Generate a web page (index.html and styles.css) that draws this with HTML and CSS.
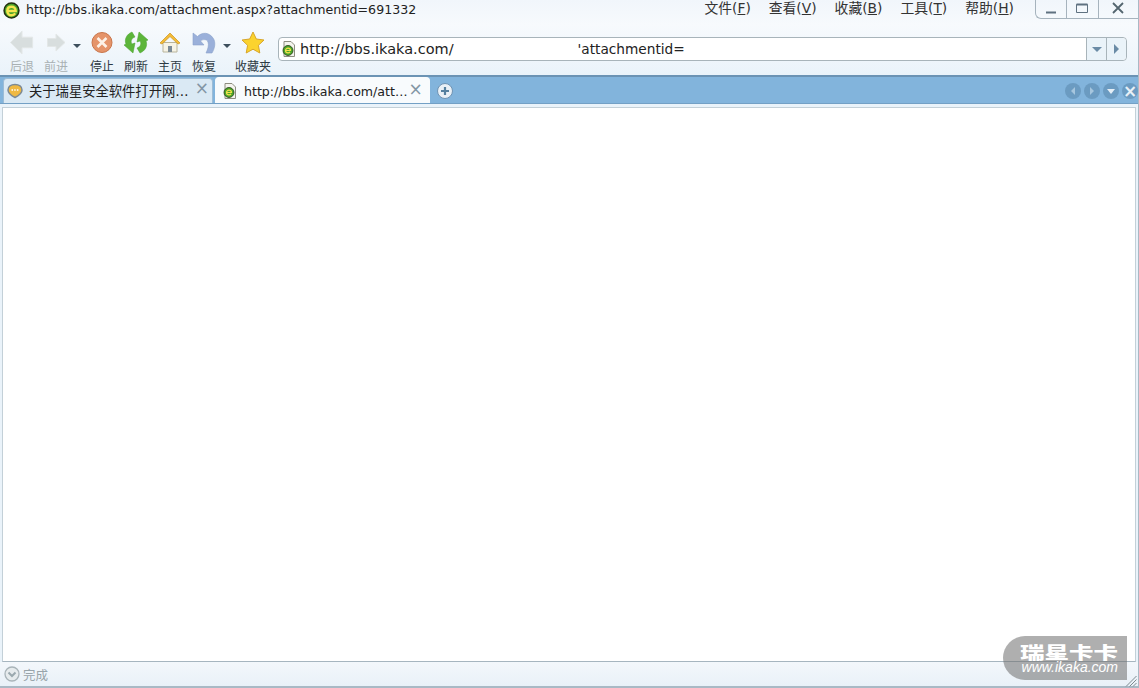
FILE: index.html
```html
<!DOCTYPE html>
<html lang="zh">
<head>
<meta charset="utf-8">
<title>Browser</title>
<link rel="stylesheet" href="styles.css">
</head>
<body>
<svg class="defs" width="0" height="0">
  <defs>
    <g id="ie">
      <circle cx="8" cy="8" r="7" fill="#4aa52a" stroke="#23300f" stroke-width="1.400"/>
      <path d="M4 8.500h8c0-2.600-1.600-4-4-4s-4 1.600-4 4 1.700 4 4 4c1.500 0 2.700-.6 3.500-1.800" fill="none" stroke="#f6e54e" stroke-width="2.200"/>
    </g>
    <g id="pagefav">
      <path d="M3 .5h7l3.500 3.500v11.500H3z" fill="#f4f4ee" stroke="#8d8d80"/>
      <circle cx="7" cy="9.500" r="5" fill="#4aa52a" stroke="#263a12" stroke-width=".8"/>
      <path d="M4.500 9.500h5c0-1.500-1-2.300-2.500-2.300S4.500 8.200 4.500 9.500s1 2.400 2.500 2.400c.9 0 1.600-.3 2.100-1" fill="none" stroke="#f4e04a" stroke-width="1.200"/>
    </g>
  </defs>
</svg>
<div class="window">
  <header class="titlebar">
    <svg class="title-icon" width="17" height="17" viewBox="0 0 16 16"><use href="#ie"/></svg>
    <span class="title-text">http://bbs.ikaka.com/attachment.aspx?attachmentid=691332</span>
    <nav class="menu">
      <span class="menu-item">文件(<u>F</u>)</span>
      <span class="menu-item">查看(<u>V</u>)</span>
      <span class="menu-item">收藏(<u>B</u>)</span>
      <span class="menu-item">工具(<u>T</u>)</span>
      <span class="menu-item">帮助(<u>H</u>)</span>
    </nav>
    <div class="win-controls">
      <span class="win-btn"><svg width="14" height="14" viewBox="0 0 14 14"><path d="M2 11.500h10" stroke="#5f7180" stroke-width="2"/></svg></span>
      <span class="win-btn"><svg width="14" height="14" viewBox="0 0 14 14"><path d="M1.500 3.500h11v8h-11z" fill="none" stroke="#5f7180"/><path d="M1.500 3.500h11" stroke="#5f7180" stroke-width="2"/></svg></span>
      <span class="win-btn win-close"><svg width="14" height="14" viewBox="0 0 14 14"><path d="M2 2l10 10M12 2L2 12" stroke="#54656f" stroke-width="1.800"/></svg></span>
    </div>
  </header>

  <section class="toolbar">
    <div class="tool tool-back is-off">
      <svg width="26" height="26" viewBox="0 0 26 26"><path d="M1 13 13 1v6.500h11v11H13V25z" fill="#d8dede" stroke="#e3e7e7"/></svg>
      <span class="tool-label">后退</span>
    </div>
    <div class="tool tool-forward is-off">
      <svg width="20" height="20" viewBox="0 0 20 20"><path d="M19 10 10 1.500v4.500H1.500v8H10v4.500z" fill="#d8dede" stroke="#e3e7e7"/></svg>
      <span class="tool-label">前进</span>
    </div>
    <span class="caret caret-nav"></span>
    <div class="tool tool-stop">
      <svg width="22" height="22" viewBox="0 0 22 22"><circle cx="11" cy="11" r="10" fill="#e5946a" stroke="#c9754a"/><path d="M6.500 6.500l9 9M15.500 6.500l-9 9" stroke="#fdf2e8" stroke-width="2.600"/></svg>
      <span class="tool-label">停止</span>
    </div>
    <div class="tool tool-refresh">
      <svg width="24" height="23" viewBox="0 0 24 23"><g fill="#5cb53a" stroke="#46a02d" stroke-width=".5"><path d="M8 1C3 3 0 8 2 13L0 14 9 22 11 12 8 13C6 10 8 7 11 6Z"/><path d="M16 22C21 20 24 15 22 10L24 9 15 1 13 11 16 10C18 13 16 16 13 17Z"/></g></svg>
      <span class="tool-label">刷新</span>
    </div>
    <div class="tool tool-home">
      <svg width="22" height="22" viewBox="0 0 22 22"><path d="M4 11v9.500h14V11z" fill="#f6f3e6" stroke="#b9b49c"/><path d="M9 20.500v-6h4v6z" fill="#7b8a97"/><path d="M1 11.500 11 1.500l10 10-2 1-8-7.500-8 7.500z" fill="#f3bb38" stroke="#cf9a2b" stroke-width=".8"/></svg>
      <span class="tool-label">主页</span>
    </div>
    <div class="tool tool-undo">
      <svg width="24" height="23" viewBox="0 0 24 23"><path d="M1 2V14H12L8.500 10C11 8 15 8 16 11 17 14 16 18 14 22H20C23 17 24 11 21 7 17 1 10 1 5.500 5.500Z" fill="#9ab0da" stroke="#8aa1ca" stroke-width=".6"/></svg>
      <span class="tool-label">恢复</span>
    </div>
    <span class="caret caret-undo"></span>
    <div class="tool tool-fav">
      <svg width="24" height="23" viewBox="0 0 24 23"><path d="M12 1l3.300 7 7.700 1-5.600 5.300 1.400 7.700L12 18.200 5.200 22l1.400-7.700L1 9l7.700-1z" fill="#fbd32e" stroke="#d7a52a"/></svg>
      <span class="tool-label">收藏夹</span>
    </div>
    <div class="address">
      <svg class="address-icon" width="16" height="16" viewBox="0 0 16 16"><use href="#pagefav"/></svg>
      <span class="address-start">http://bbs.ikaka.com/</span>
      <span class="address-end">'attachmentid=</span>
      <span class="address-btn"><span class="tri-down"></span></span>
      <span class="address-btn address-go"><span class="tri-right"></span></span>
    </div>
  </section>

  <section class="tabbar">
    <div class="tab">
      <svg width="16" height="16" viewBox="0 0 16 16"><path d="M8 1.500c4 0 7 2 7 5.500s-3 5.500-7 7.500C4 12.500 1 10.500 1 7s3-5.500 7-5.500z" fill="#f0b942" stroke="#7c8a95" stroke-width="1.500"/><path d="M4.500 7h7" stroke="#fff" stroke-width="1.500" stroke-dasharray="1.500 1.200"/></svg>
      <span class="tab-title">关于瑞星安全软件打开网…</span>
      <span class="tab-close">×</span>
    </div>
    <div class="tab tab-active">
      <svg width="16" height="16" viewBox="0 0 16 16"><use href="#pagefav"/></svg>
      <span class="tab-title">http://bbs.ikaka.com/att…</span>
      <span class="tab-close">×</span>
    </div>
    <span class="tab-new"><svg width="16" height="16" viewBox="0 0 16 16"><circle cx="8" cy="8" r="7.500" fill="#e9f0f6" stroke="#6f93b3"/><path d="M8 4v8M4 8h8" stroke="#55809f" stroke-width="2.200"/></svg></span>
    <div class="tab-tools">
      <span class="round-btn"><span class="rb-left"></span></span>
      <span class="round-btn"><span class="rb-right"></span></span>
      <span class="round-btn"><span class="rb-down"></span></span>
      <span class="round-btn rb-x">×</span>
    </div>
  </section>

  <main class="content"></main>

  <footer class="statusbar">
    <svg width="16" height="16" viewBox="0 0 16 16"><circle cx="8" cy="8" r="7" fill="#e6ebed" stroke="#a9b4b9" stroke-width="1.300"/><path d="M4.500 6.500 8 10l3.500-3.500" fill="none" stroke="#9aa8ae" stroke-width="2"/></svg>
    <span class="status-text">完成</span>
  </footer>

  <svg class="grip" width="12" height="12" viewBox="0 0 12 12"><path d="M11.500 1 1 11.500M11.500 4.500 4.500 11.500M11.500 8 8 11.500" stroke="#7d8a90" stroke-width="1"/></svg>

  <div class="watermark">
    <span class="wm-cn">瑞星卡卡</span>
    <span class="wm-url">www.ikaka.com</span>
  </div>
</div>
</body>
</html>
```

FILE: styles.css
```css
* { box-sizing: border-box; }
html, body { margin: 0; padding: 0; height: 100%; overflow: hidden; }
body { font-family: "DejaVu Sans", "Noto Sans CJK SC", sans-serif; color: #222; background: #fff; }
.defs { position: absolute; }
.window { position: relative; width: 1139px; height: 688px; display: flex; flex-direction: column; background: linear-gradient(#f1f6fb, #f7fafd 25px, #eaf3fa 75px); border-right: 1px solid #a9b9c5; }

.titlebar { height: 25px; flex: none; display: flex; align-items: flex-start; }
.title-icon { margin: 2px 6px 0 3px; flex: none; }
.title-text { font-size: 12.600px; line-height: 20px; color: #222; white-space: nowrap; }
.menu { margin-left: auto; display: flex; gap: 18px; font-family: "DejaVu Sans", "Noto Sans CJK SC", sans-serif; font-size: 13.800px; line-height: 16px; color: #333; }
.menu-item { white-space: nowrap; }
.win-controls { display: flex; width: 103px; height: 19px; margin-left: 21px; border: 1px solid #a6b3bd; border-top: 0; border-right: 0; border-radius: 0 0 0 6px; flex: none; }
.win-btn { flex: 1; display: flex; align-items: center; justify-content: center; border-right: 1px solid #a6b3bd; padding-bottom: 2px; }
.win-close { flex: 1.300; border-right: 0; }

.toolbar { height: 50px; flex: none; display: flex; align-items: flex-start; position: relative; }
.tool { width: 34px; height: 49px; flex: none; display: flex; flex-direction: column; align-items: center; }
.tool svg { height: 25px; flex: none; margin-top: 5px; }
.tool-label { font-family: "Noto Sans CJK SC", sans-serif; font-size: 12px; line-height: 15px; margin-top: 3px; color: #2d3a43; white-space: nowrap; }
.is-off .tool-label { color: #a9b1b3; }
.tool-back { margin-left: 5px; }
.caret { width: 0; height: 0; border: 4px solid transparent; border-top-color: #3d4f5c; border-bottom: 0; flex: none; margin-top: 19px; }
.caret-nav { margin-left: 0; margin-right: 2px; }
.caret-undo { margin-left: 2px; margin-right: 3px; }
.tool-fav { width: 38px; }
.tool-stop { margin-left: 2px; }
.address { flex: 1; height: 24px; margin: 12px 11px 0 6px; display: flex; align-items: center; background: #fff; border: 1px solid #a8b4ba; border-radius: 4px; }
.address-icon { margin-left: 2px; flex: none; }
.address-start, .address-end { white-space: nowrap; color: #222; }
.address-start { margin-left: 3px; font-size: 14.500px; }
.address-end { margin-left: 124px; margin-right: auto; font-size: 13.700px; }
.address-btn { width: 20px; height: 22px; flex: none; display: flex; align-items: center; justify-content: center; background: #eaf3f9; border-left: 1px solid #a8b4ba; }
.address-go { border-radius: 0 4px 4px 0; }
.tri-down { width: 0; height: 0; border: 5px solid transparent; border-top: 5px solid #6a8ba6; border-bottom: 0; }
.tri-right { width: 0; height: 0; border: 5px solid transparent; border-left: 5px solid #6a8ba6; border-right: 0; }

.tabbar { height: 29px; flex: none; display: flex; align-items: flex-end; padding-left: 3px; gap: 2px; background: #82b4dc; border-top: 2px solid #6b93b4; border-bottom: 1px solid #73a0c5; }
.tab { width: 210px; height: 25px; flex: none; display: flex; align-items: center; gap: 6px; padding: 0 3px 1px 3px; background: #dae9f4; border: 1px solid #9cbcd6; border-bottom: 0; border-radius: 4px 4px 0 0; }
.tab svg { flex: none; }
.tab-active { width: 215px; height: 26px; background: #f8fbfd; border-color: #f8fbfd; padding: 1px 6px 0 6px; }
.tab-title { flex: none; font-size: 13.300px; white-space: nowrap; color: #222; }
.tab-active .tab-title { font-size: 12.600px; }
.tab-close { margin-left: auto; font-size: 17px; line-height: 17px; color: #8396a5; margin-top: -4px; }
.tab-active .tab-close { margin-left: -5px; }
.tab-new { margin: 0 0 4px 5px; height: 16px; flex: none; display: flex; }
.tab-tools { margin-left: auto; margin-bottom: 4px; display: flex; gap: 3px; flex: none; }
.round-btn { width: 16px; height: 16px; border-radius: 50%; background: #6b9bc1; display: flex; align-items: center; justify-content: center; color: #e7f0f7; }
.rb-left { width: 0; height: 0; border: 4px solid transparent; border-right: 4px solid #a6c6de; border-left: 0; }
.rb-right { width: 0; height: 0; border: 4px solid transparent; border-left: 4px solid #a6c6de; border-right: 0; }
.rb-down { width: 0; height: 0; border: 4px solid transparent; border-top: 5px solid #e4eef6; border-bottom: 0; }
.rb-x { font-size: 17px; line-height: 16px; font-weight: 700; }

.content { flex: 1; min-height: 0; margin: 3px 2px 0 2px; background: #fff; border: 1px solid #c3d0d8; border-bottom: 1px solid #a6b5bf; }

.statusbar { height: 26px; flex: none; display: flex; align-items: center; gap: 3px; padding: 0 0 0 4px; background: linear-gradient(#f3f7fb, #e9f1f8); border-bottom: 2px solid #a9b9c5; }
.status-text { font-family: "Noto Sans CJK SC", sans-serif; font-size: 12.500px; color: #98a4aa; }
.grip { position: absolute; right: 1px; bottom: 1px; }

.watermark { position: absolute; left: 1003px; top: 636px; width: 124px; height: 44px; background: rgba(110, 110, 110, .55); border-radius: 24px 0 0 24px; display: flex; flex-direction: column; align-items: flex-end; padding: 8px 9px 0 0; color: #fff; }
.wm-cn { display: block; font-family: "Noto Sans CJK SC", sans-serif; font-weight: 900; font-size: 17px; line-height: 16px; height: 16px; transform: scaleX(1.440); transform-origin: right center; white-space: nowrap; }
.wm-url { font-family: "Liberation Sans", sans-serif; font-style: italic; font-size: 14px; line-height: 15px; white-space: nowrap; }
```
